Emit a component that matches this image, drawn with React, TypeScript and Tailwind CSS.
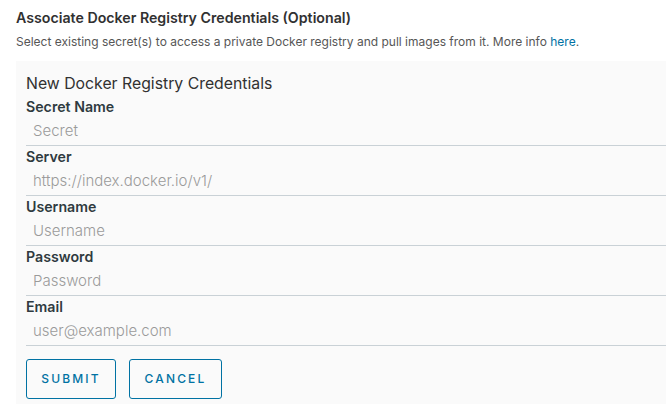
import React from 'react';

const fields = [
  { label: 'Secret Name', placeholder: 'Secret' },
  { label: 'Server', placeholder: 'https://index.docker.io/v1/' },
  { label: 'Username', placeholder: 'Username' },
  { label: 'Password', placeholder: 'Password' },
  { label: 'Email', placeholder: 'user@example.com' },
];

export default function App() {
  return (
    <div className="w-[666px] h-[418px] overflow-hidden bg-white pl-4 pt-[8px] font-['Inter',sans-serif] text-[#333333]">
      <h3 className="text-[14.2px] font-semibold leading-[20px] text-[#313131]">
        Associate Docker Registry Credentials (Optional)
      </h3>
      <p className="text-[12px] leading-[18px] mt-[5px] text-[#565656]">
        Select existing secret(s) to access a private Docker registry and pull images from it. More info{' '}
        <a className="text-[#0072a3]">here</a>.
      </p>

      <div className="mt-[10px] bg-[#fafafa] pl-[10px] pt-[13px] pb-[5px]">
        <h4 className="text-[15.8px] leading-[20px] mb-[2px] text-[#313131]">New Docker Registry Credentials</h4>
        <div className="flex flex-col">
          {fields.map((f) => (
            <div key={f.label} className="flex flex-col mt-[1px]">
              <label className="text-[14.2px] font-semibold leading-[20px] text-[#2f3a40]">
                {f.label}
              </label>
              <div className="h-[29px] border-b border-[#c9d1d6] pl-[7px] text-[15px] font-light leading-[28px] text-[#9a9a9a]">
                {f.placeholder}
              </div>
            </div>
          ))}
        </div>
        <div className="flex gap-[13px] mt-[13px]">
          <button className="w-[90px] h-[40px] border border-[#0072a3] rounded-[3px] text-[12px] font-medium tracking-[0.18em] text-[#0072a3]">
            SUBMIT
          </button>
          <button className="w-[93px] h-[40px] border border-[#0072a3] rounded-[3px] text-[12px] font-medium tracking-[0.18em] text-[#0072a3]">
            CANCEL
          </button>
        </div>
      </div>
    </div>
  );
}
